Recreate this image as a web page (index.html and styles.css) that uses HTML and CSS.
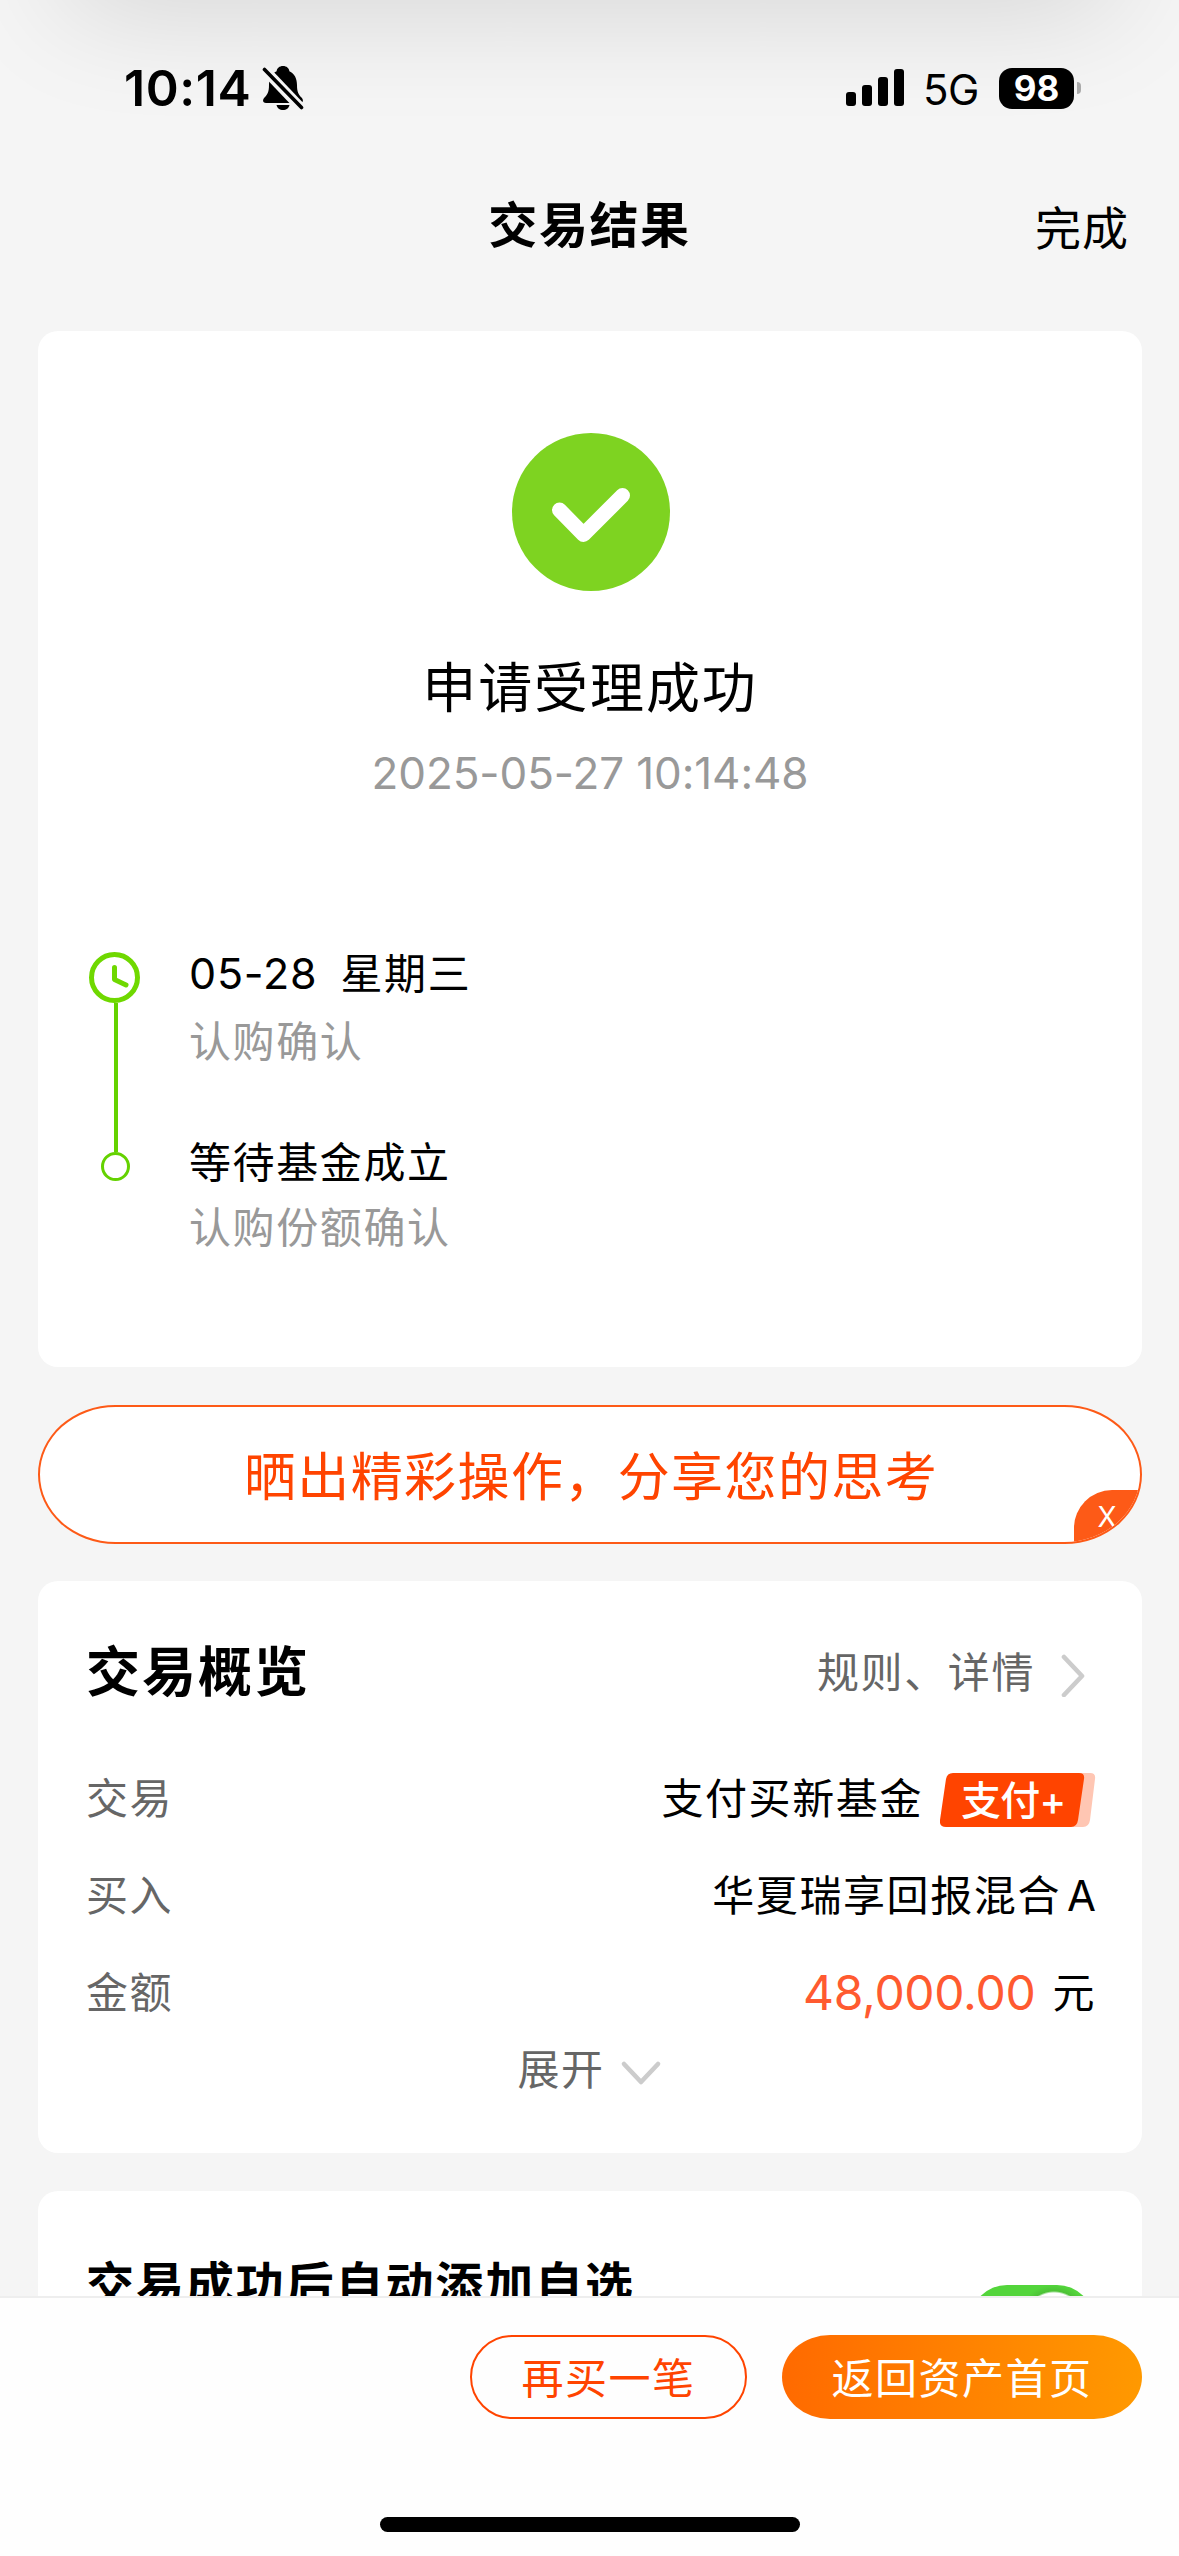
FILE: index.html
```html
<!DOCTYPE html>
<html lang="zh-CN">
<head>
  <meta charset="UTF-8">
  <meta name="viewport" content="width=device-width, initial-scale=1">
  <title>交易结果</title>
  <link rel="stylesheet" href="styles.css">
</head>
<body>
  <div class="page">
    <div class="status-bar">
      <span class="time">10:14</span>
      <svg class="bell" width="42" height="46" viewBox="0 0 42 46">
        <path d="M21 1c-3.600 0-6 2.200-6.400 5.200C9.500 8.500 7 13.500 7 20c0 7-1.500 9.500-4.500 12.500C0 35 1 38 4 38h34c3 0 4-3 1.500-5.500C36.500 29.500 35 27 35 20c0-6.500-2.500-11.500-7.600-13.800C27 3.200 24.600 1 21 1z"/>
        <path d="M14.500 40h13c-.6 3-3.200 5-6.500 5s-5.900-2-6.500-5z"/>
        <path d="M2 4l38 40" stroke="#f4f4f4" stroke-width="10"/>
        <path d="M2.500 4.500l37 38" stroke="#000" stroke-width="3.600" stroke-linecap="round"/>
      </svg>
      <svg class="signal" width="58" height="38" viewBox="0 0 58 38">
        <rect x="0" y="23" width="10" height="14" rx="3"/>
        <rect x="16" y="16" width="10" height="21" rx="3"/>
        <rect x="32" y="8" width="10" height="29" rx="3"/>
        <rect x="48" y="0" width="10" height="37" rx="3"/>
      </svg>
      <span class="network">5G</span>
      <span class="battery">98</span>
      <span class="battery-tip"></span>
    </div>

    <header class="nav">
      <h1>交易结果</h1>
      <a class="done">完成</a>
    </header>

    <main>
      <section class="card result">
        <svg class="success" width="158" height="158" viewBox="0 0 158 158">
          <circle cx="79" cy="79" r="79" fill="#7ed321"/>
          <path d="M47.500 77l24 24.500 39-39" fill="none" stroke="#fff" stroke-width="15" stroke-linecap="round" stroke-linejoin="round"/>
        </svg>
        <h2>申请受理成功</h2>
        <p class="date">2025-05-27 10:14:48</p>

        <div class="timeline">
          <div class="rail">
            <svg width="51" height="51" viewBox="0 0 51 51" fill="none" stroke="#6fd800" stroke-linecap="round" stroke-linejoin="round">
              <circle cx="25.500" cy="25.500" r="23" stroke-width="5"/>
              <path d="M25.500 15.500v12l11.500 5.500" stroke-width="5"/>
            </svg>
            <span class="line"></span>
            <span class="dot"></span>
          </div>
          <div class="steps">
            <div class="step">
              <p><span class="day">05-28</span>星期三</p>
              <p class="sub">认购确认</p>
            </div>
            <div class="step">
              <p>等待基金成立</p>
              <p class="sub">认购份额确认</p>
            </div>
          </div>
        </div>
      </section>

      <div class="share">
        <span>晒出精彩操作，分享您的思考</span>
        <span class="close">X</span>
      </div>

      <section class="card overview">
        <div class="card-head">
          <h3>交易概览</h3>
          <a class="rules">规则、详情
            <svg width="28" height="44" viewBox="0 0 28 44" fill="none" stroke="#ccc" stroke-width="4.600" stroke-linecap="round" stroke-linejoin="round"><path d="M4 4l18 19L4 42"/></svg>
          </a>
        </div>
        <div class="row">
          <span class="label">交易</span>
          <span class="value">支付买新基金
            <span class="tag">
              <svg width="156" height="54" viewBox="0 0 156 54">
                <path d="M20 0h130q6 0 5 6l-5 41q-1 7-7 7H20z" fill="#ffc6b3"/>
                <path d="M13 0h126q6 0 5 6l-6 41q-1 7-7 7H6q-7 0-6-7L6 6q1-6 7-6z" fill="#ff4400"/>
              </svg>
              <span class="tag-text">支付+</span>
            </span>
          </span>
        </div>
        <div class="row">
          <span class="label">买入</span>
          <span class="value">华夏瑞享回报混合<span class="share-class">A</span></span>
        </div>
        <div class="row">
          <span class="label">金额</span>
          <span class="value"><span class="amount">48,000.00</span><span class="unit">元</span></span>
        </div>
        <div class="expand">展开
          <svg width="42" height="26" viewBox="0 0 42 26" fill="none" stroke="#ccc" stroke-width="4.600" stroke-linecap="round" stroke-linejoin="round"><path d="M4 4l17 18L38 4"/></svg>
        </div>
      </section>

      <section class="card watch">
        <h4>交易成功后自动添加自选</h4>
        <span class="switch"></span>
      </section>
    </main>

    <footer>
      <div class="actions">
        <button class="btn outline">再买一笔</button>
        <button class="btn primary">返回资产首页</button>
      </div>
      <div class="home-indicator"></div>
    </footer>
  </div>
</body>
</html>
```
FILE: styles.css
```css
* { box-sizing: border-box; }
body { margin: 0; background: #f5f5f5; color: #000; font-family: Inter, "Noto Sans CJK SC", sans-serif; font-size: 42px; line-height: 60px; letter-spacing: 1.6px; }
h1, h2, h3, h4, p { margin: 0; }
.page { position: relative; display: flex; flex-direction: column; width: 1179px; height: 2556px; overflow: hidden; }

/* soft shade behind the status bar */
.page::before { content: ""; position: absolute; left: 70px; right: 70px; top: -100px; height: 100px; box-shadow: 0 0 120px 4px rgba(0,0,0,0.15); }

.status-bar { position: relative; display: flex; align-items: center; height: 176px; padding-left: 124px; flex: none; letter-spacing: 0; }
.time { width: 128px; font-size: 50px; font-weight: 600; letter-spacing: 0.6px; }
.bell { margin-left: 10px; }
.signal { margin-left: 542px; }
.network { width: 74px; padding-left: 19px; font-size: 42px; line-height: 50px; margin-top: 3px; letter-spacing: -0.6px; }
.battery { width: 75px; height: 41px; margin-left: 21px; border-radius: 13px; background: #000; color: #fff; font-size: 35px; font-weight: 700; line-height: 41px; text-align: center; }
.battery-tip { width: 4px; height: 12px; margin-left: 3px; border-radius: 0 4px 4px 0; background: #aaa; }

.nav { display: grid; grid-template-columns: 1fr auto 1fr; align-items: center; height: 100px; padding-right: 50px; flex: none; }
.nav h1 { grid-column: 2; padding-left: 50px; font-size: 49px; line-height: 100px; font-weight: 600; }
.done { justify-self: end; font-size: 46px; padding-top: 4px; letter-spacing: 1px; }

main { flex: 1; min-height: 0; padding: 55px 37px 0 38px; overflow: hidden; }
.card { background: #fff; border-radius: 20px; }

.result { height: 1036px; padding-top: 102px; text-align: center; }
.success { display: block; margin: 0 auto; padding-left: 1px; width: 159px; }
.result h2 { margin-top: 58px; font-size: 54px; line-height: 80px; font-weight: 400; letter-spacing: 1.9px; }
.date { margin-top: 14px; font-size: 44px; line-height: 60px; color: #999; letter-spacing: -0.1px; }

.timeline { display: flex; padding: 149px 0 0 51px; text-align: left; }
.rail { display: flex; flex-direction: column; align-items: center; width: 51px; }
.line { width: 4px; height: 149px; margin-left: 3px; background: #64d200; }
.dot { width: 29px; height: 29px; margin-left: 2px; border: 3px solid #64d200; border-radius: 50%; }
.steps { display: flex; flex-direction: column; gap: 61px; margin: -9px 0 0 49px; }
.step p + p { margin-top: 8px; }
.step + .step p + p { margin-top: 5px; }
.day { margin-right: 23px; font-size: 43px; letter-spacing: 0.8px; }
.sub { color: #999; }

.share { position: relative; display: flex; align-items: center; justify-content: center; height: 139px; margin: 38px 0 37px; padding: 7px 0 0 2px; border: 2px solid #fd5a17; border-radius: 78px / 70px; background: #fff; color: #ff4400; font-size: 52px; overflow: hidden; }
.share span:first-child { letter-spacing: 1.4px; }
.close { position: absolute; right: -2px; bottom: -2px; width: 68px; height: 54px; padding-right: 2px; border-radius: 38px 0 0 0; background: #fd5a17; color: #fff; font-size: 28px; line-height: 54px; text-align: center; letter-spacing: 0; }

.overview { height: 572px; padding: 42px 46px 0 48px; }
.card-head { display: flex; justify-content: space-between; align-items: center; height: 100px; margin-bottom: 27px; }
.card-head h3 { font-size: 54px; font-weight: 700; letter-spacing: 2px; }
.rules { display: flex; align-items: center; color: #666; }
.rules svg { margin: 3px 8px 0 25px; }
.row { display: flex; justify-content: space-between; align-items: center; height: 97px; }
.label { color: #666; }
.value { display: flex; align-items: center; }
.tag { position: relative; width: 156px; height: 54px; margin: 2px 0 0 17px; }
.tag svg { display: block; }
.tag-text { position: absolute; left: 21px; top: 1px; color: #fff; font-size: 40px; font-weight: 500; line-height: 54px; letter-spacing: -0.7px; }
.share-class { margin-left: 6px; letter-spacing: 0; }
.amount { color: #ff5a30; font-size: 48px; letter-spacing: -0.3px; }
.unit { margin-left: 17px; }
.expand { display: flex; align-items: center; justify-content: center; height: 58px; padding-right: 3px; color: #666; }
.expand svg { margin: 5px 0 0 15px; }

.watch { display: flex; justify-content: space-between; height: 260px; margin-top: 38px; padding: 54px 48px 0 48px; }
.watch h4 { font-size: 48px; line-height: 80px; font-weight: 700; letter-spacing: 1.9px; }
.switch { width: 124px; height: 74px; margin-top: 40px; border-radius: 37px; background: radial-gradient(circle at 84px 37px, #fff 29px, #4cc236 31px, #53d53b 37px); }

footer { position: relative; flex: none; height: 260px; border-top: 2px solid #eee; background: #fefefe; }
.actions { display: flex; justify-content: flex-end; gap: 35px; padding: 37px 37px 0 0; }
.btn { height: 84px; padding: 3px 0 0; border: none; border-radius: 42px; font: inherit; letter-spacing: 1.5px; }
.outline { width: 277px; border: 2px solid #ff4400; background: transparent; color: #ff4400; }
.primary { width: 360px; border-radius: 48px / 42px; background: linear-gradient(90deg, #ff6a00, #ff9900); color: #fff; }
.home-indicator { width: 420px; height: 15px; margin: 98px auto 0; border-radius: 8px; background: #000; }
```
